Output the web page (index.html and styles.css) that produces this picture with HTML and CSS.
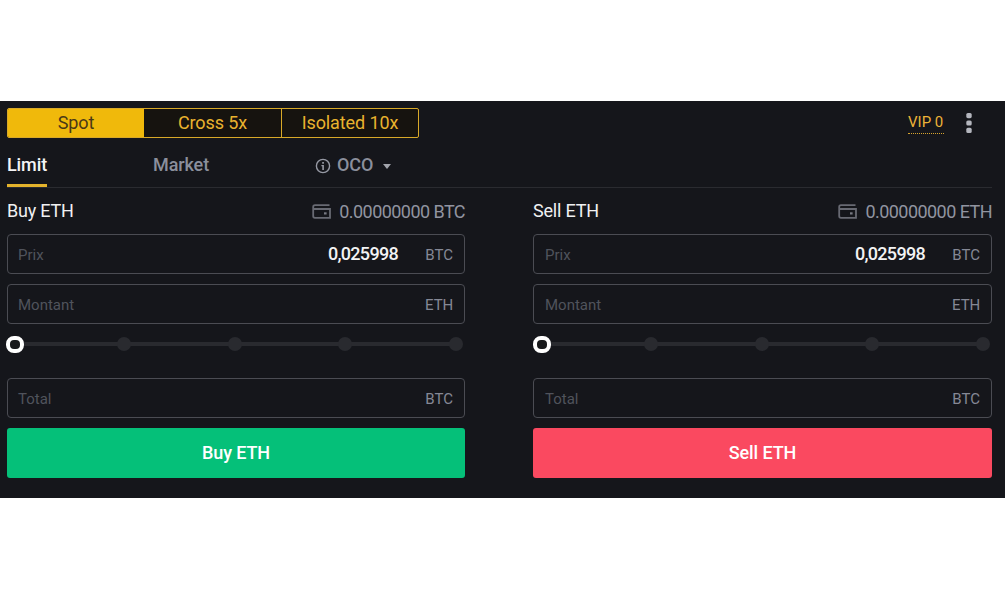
FILE: index.html
```
<!DOCTYPE html>
<html lang="en">
<head>
<meta charset="utf-8">
<title>Spot trading</title>
<link rel="stylesheet" href="styles.css">
</head>
<body>
<main class="panel">
  <header class="top">
    <div class="modes">
      <span class="mode active">Spot</span>
      <span class="mode">Cross 5x</span>
      <span class="mode">Isolated 10x</span>
    </div>
    <div class="tools">
      <span class="vip">VIP 0</span>
      <svg class="more" width="6" height="20" viewBox="0 0 6 20"><g fill="#b4b6be"><rect x=".3" y="0" width="5.4" height="5.2" rx="1.6"/><rect x=".3" y="7.4" width="5.4" height="5.2" rx="1.6"/><rect x=".3" y="14.8" width="5.4" height="5.2" rx="1.6"/></g></svg>
    </div>
  </header>
  <nav class="tabs">
    <span class="tab current">Limit</span>
    <span class="tab market">Market</span>
    <span class="tab oco">
      <svg width="16" height="16" viewBox="0 0 16 16"><circle cx="8" cy="8" r="6.6" fill="none" stroke="#9699a4" stroke-width="1.4"/><path d="M7.2 4.1h1.7v1.7H7.2zM6.4 7h2.5v4.9H7.3V8.3h-.9z" fill="#9699a4"/></svg>
      <span class="oco-text">OCO</span>
      <svg class="caret" width="8" height="5" viewBox="0 0 8 5"><path d="M0 0h8L4 5z" fill="#a2a4ac"/></svg>
    </span>
  </nav>
  <div class="forms">
    <section>
      <div class="head"><h2>Buy ETH</h2>
        <div class="balance"><svg width="19" height="15" viewBox="0 0 19 15"><path d="M17.5 1.2H3Q1.2 1.2 1.2 3v9q0 1.8 1.8 1.8h15V5H1.2" fill="none" stroke="#686a73" stroke-width="1.8"/><rect x="12" y="8.3" width="2.6" height="2.2" fill="#777982"/></svg><span>0.00000000 BTC</span></div>
      </div>
      <div class="field"><label>Prix</label><b>0,025998</b><span class="unit">BTC</span></div>
      <div class="field"><label>Montant</label><span class="unit">ETH</span></div>
      <div class="slider"><i class="knob"></i><i></i><i></i><i></i><i></i></div>
      <div class="field"><label>Total</label><span class="unit">BTC</span></div>
      <div class="action buy"><span>Buy ETH</span></div>
    </section>
    <section class="selling">
      <div class="head"><h2>Sell ETH</h2>
        <div class="balance"><svg width="19" height="15" viewBox="0 0 19 15"><path d="M17.5 1.2H3Q1.2 1.2 1.2 3v9q0 1.8 1.8 1.8h15V5H1.2" fill="none" stroke="#686a73" stroke-width="1.8"/><rect x="12" y="8.3" width="2.6" height="2.2" fill="#777982"/></svg><span>0.00000000 ETH</span></div>
      </div>
      <div class="field"><label>Prix</label><b>0,025998</b><span class="unit">BTC</span></div>
      <div class="field"><label>Montant</label><span class="unit">ETH</span></div>
      <div class="slider"><i class="knob"></i><i></i><i></i><i></i><i></i></div>
      <div class="field"><label>Total</label><span class="unit">BTC</span></div>
      <div class="action sell"><span>Sell ETH</span></div>
    </section>
  </div>
</main>
</body>
</html>
```
FILE: styles.css
```
* { box-sizing: border-box; }
body { margin: 0; padding-top: 101px; background: #fff; font: 18px/22px Roboto, "Liberation Sans", sans-serif; white-space: nowrap; }
svg { display: block; flex: none; }
.panel { height: 397px; padding: 7px 13px 0 7px; background: #15161b; }
.top { height: 30px; display: flex; justify-content: space-between; }
.modes { width: 412px; display: grid; grid-template-columns: 136px 138px 136px; border: 1px solid #d9a928; border-radius: 2px; overflow: hidden; color: #e9b22e; background: #16130f; letter-spacing: -.1px; }
.mode { display: flex; align-items: center; justify-content: center; border-right: 1px solid #d9a928; }
.mode:last-child { border-right: 0; }
.mode.active { background: #f0b90b; color: #4a3817; border-right: 0; }
.tools { display: flex; align-items: flex-start; padding: 5px 20px 0 0; }
.vip { width: 36px; height: 21px; line-height: 18px; font-size: 15px; color: #edb338; border-bottom: 1px dotted #d9a52e; }
.more { margin-left: 22px; }
.tabs { height: 50px; display: flex; border-bottom: 1px solid #2a2b30; font-weight: 500; color: #8b8f9c; letter-spacing: -.1px; }
.tab { height: 49px; padding-top: 16px; display: flex; }
.current { width: 40px; color: #f4f4f5; border-bottom: 3px solid #e4b32c; }
.market { width: 56px; margin-left: 106px; }
.oco { margin-left: 106px; }
.oco > svg:first-child { margin: 4px 6px 0 0; }
.oco-text { width: 36px; }
.oco .caret { margin: 10px 0 0 10px; }
.forms { display: grid; grid-template-columns: 458px 459px; column-gap: 68px; }
.head { height: 46px; display: flex; justify-content: space-between; padding-top: 12px; }
h2 { margin: 0; font-size: 18px; line-height: 22px; font-weight: 400; color: #f0f0f2; letter-spacing: -.2px; }
.balance { display: flex; color: #9194a0; padding-top: 1px; letter-spacing: -.55px; }
.balance svg { margin: 3px 8px 0 0; }
.field { height: 40px; padding: 0 11px 0 10px; display: flex; align-items: center; border: 1px solid #4b4c53; border-radius: 4px; margin-bottom: 10px; font-size: 15px; }
.selling .field { padding-left: 11px; }
.field label { margin-right: auto; color: #50535c; padding-top: 2px; }
.field b { font-size: 18px; font-weight: 500; color: #f3f3f4; margin-right: 27px; letter-spacing: -.7px; }
.unit { width: 28px; text-align: right; color: #858895; padding-top: 2px; }
.slider { height: 22px; margin: -1px 2px 23px -1px; display: flex; align-items: center; justify-content: space-between; background: linear-gradient(#292a2f, #292a2f) 8px 9px / calc(100% - 16px) 4px no-repeat; }
.selling .slider { margin-left: 0; }
.slider i { width: 14px; height: 14px; border-radius: 50%; background: #292a2f; }
.slider .knob { width: 18px; height: 17px; margin-right: -4px; border: 4px solid #fff; border-radius: 8px; background: #18191b; }
.action { height: 50px; display: flex; align-items: center; justify-content: center; border-radius: 3px; color: #fff; font-weight: 500; letter-spacing: -.1px; }
.buy { background: #05c079; }
.sell { background: #fa4960; }
```
